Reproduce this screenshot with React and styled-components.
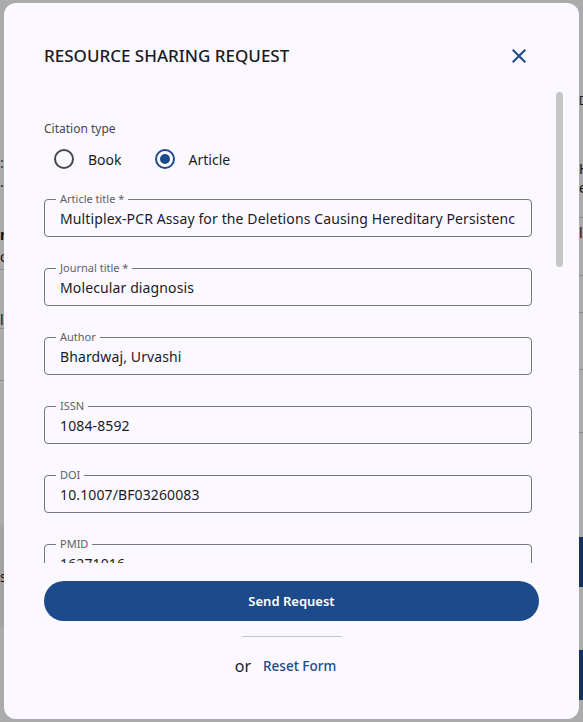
import React, { useState, useRef, useLayoutEffect } from 'react'
import styled, { createGlobalStyle } from 'styled-components'

const fields = [
  { id: 'articleTitle', label: 'Article title *', value: 'Multiplex-PCR Assay for the Deletions Causing Hereditary Persistence of Fetal Hemoglobin' },
  { id: 'journalTitle', label: 'Journal title *', value: 'Molecular diagnosis' },
  { id: 'author', label: 'Author', value: 'Bhardwaj, Urvashi' },
  { id: 'issn', label: 'ISSN', value: '1084-8592' },
  { id: 'doi', label: 'DOI', value: '10.1007/BF03260083' },
  { id: 'pmid', label: 'PMID', value: '16271016' },
  { id: 'volume', label: 'Volume', value: '2' },
  { id: 'issue', label: 'Issue', value: '4' },
  { id: 'pages', label: 'Pages', value: '309-319' },
  { id: 'year', label: 'Publication year', value: '1997' },
  { id: 'publisher', label: 'Publisher', value: '' },
  { id: 'place', label: 'Place of publication', value: '' },
  { id: 'edition', label: 'Edition', value: '' },
  { id: 'chapter', label: 'Chapter', value: '' },
  { id: 'pickup', label: 'Pickup location', value: '' },
  { id: 'neededBy', label: 'Needed by', value: '' },
  { id: 'notes', label: 'Notes', value: '' },
]

// bits of the page that peek out from behind the dialog
const leftRows = [
  { h: 154 },
  { h: 18, text: ':', color: '#1d4a8a' },
  { h: 20, text: '.' },
  { h: 34 },
  { h: 18, text: 'n', bold: true },
  { h: 26, text: 'o', line: true },
  { h: 42 },
  { h: 17, text: 'l', line: true },
  { h: 52, line: true },
  { h: 146 },
  { h: 100, text: 's', band: true },
]

const rightRows = [
  { h: 90 },
  { h: 20, text: '⊡' },
  { h: 50 },
  { h: 18, text: 'H' },
  { h: 20, text: 'e' },
  { h: 20, line: true },
  { h: 58, text: 'l', line: true, top: true },
  { h: 37, line: true },
  { h: 57, line: true },
  { h: 63, line: true },
  { h: 104 },
  { h: 50, blue: true },
  { h: 63 },
  { h: 50, blue: true },
]

const TRACK_MARGIN = 4

function App() {
  const [citation, setCitation] = useState('article')
  const [thumb, setThumb] = useState({ top: TRACK_MARGIN, height: 0 })
  const scrollRef = useRef(null)

  const updateThumb = () => {
    const el = scrollRef.current
    if (!el) return
    const track = el.clientHeight - TRACK_MARGIN * 2
    const height = Math.round(track * el.clientHeight / el.scrollHeight)
    const maxScroll = el.scrollHeight - el.clientHeight
    const top = TRACK_MARGIN + (maxScroll > 0 ? (el.scrollTop / maxScroll) * (track - height) : 0)
    setThumb({ top, height })
  }

  useLayoutEffect(() => {
    updateThumb()
  }, [])

  return (
    <>
      <GlobalStyle />
      <Page>
        <Strip>
          {leftRows.map((r, i) => (
            <StripRow key={i} $h={r.h} $line={r.line} $band={r.band}>
              {r.text && <StripText $color={r.color} $bold={r.bold}>{r.text}</StripText>}
            </StripRow>
          ))}
        </Strip>
        <Strip>
          {rightRows.map((r, i) => (
            <StripRow key={i} $h={r.h} $line={r.line} $blue={r.blue} $top={r.top} $inset>
              {r.text && <StripText>{r.text}</StripText>}
            </StripRow>
          ))}
        </Strip>
      </Page>

      <Overlay>
        <Dialog role="dialog" aria-labelledby="rs-title">
          <Header>
            <Title id="rs-title">RESOURCE SHARING REQUEST</Title>
            <CloseButton aria-label="Close">
              <svg width="24" height="24" viewBox="0 0 24 24" fill="currentColor">
                <path d="M19 6.41 17.59 5 12 10.59 6.41 5 5 6.41 10.59 12 5 17.59 6.41 19 12 13.41 17.59 19 19 17.59 13.41 12z" />
              </svg>
            </CloseButton>
          </Header>

          <BodyWrap>
            <Body ref={scrollRef} onScroll={updateThumb}>
              <GroupLabel>Citation type</GroupLabel>
              <RadioRow>
                <RadioOption>
                  <RadioInput
                    name="citation"
                    checked={citation === 'book'}
                    onChange={() => setCitation('book')}
                  />
                  Book
                </RadioOption>
                <RadioOption>
                  <RadioInput
                    name="citation"
                    checked={citation === 'article'}
                    onChange={() => setCitation('article')}
                  />
                  Article
                </RadioOption>
              </RadioRow>

              <FieldList>
                {fields.map(f => (
                  <Field key={f.id}>
                    <Legend>{f.label}</Legend>
                    <Input id={f.id} name={f.id} defaultValue={f.value} />
                  </Field>
                ))}
              </FieldList>
            </Body>
            {thumb.height > 0 && (
              <Thumb style={{ top: thumb.top, height: thumb.height }} />
            )}
          </BodyWrap>

          <SendButton type="button">Send Request</SendButton>
          <Divider />
          <ResetRow>
            <Or>or</Or>
            <ResetLink type="button">Reset Form</ResetLink>
          </ResetRow>
        </Dialog>
      </Overlay>
    </>
  )
}

export default App

const GlobalStyle = createGlobalStyle`
  * { box-sizing: border-box; }
  html, body { margin: 0; height: 100%; }
  body {
    font-family: "Noto Sans", "DejaVu Sans", sans-serif;
    background: #fff;
    overflow: hidden;
  }
`

const Page = styled.div`
  display: flex;
  justify-content: space-between;
  height: 722px;
  overflow: hidden;
`

const Strip = styled.div`
  width: 12px;
  display: flex;
  flex-direction: column;
`

const StripRow = styled.div`
  flex: none;
  height: ${p => p.$h}px;
  display: flex;
  align-items: ${p => (p.$top ? 'flex-start' : 'center')};
  padding: ${p => (p.$top ? '6px' : '0')} 0 0 ${p => (p.$inset ? '8px' : '0')};
  font-size: 14px;
  line-height: 18px;
  background: ${p => (p.$blue ? '#1d4a8a' : p.$band ? '#f2f2f2' : 'transparent')};
  border-bottom: ${p => (p.$line ? '1px solid #cfcfd4' : '0')};
`

const StripText = styled.span`
  color: ${p => p.$color || '#1b1b1f'};
  font-weight: ${p => (p.$bold ? 700 : 400)};
`

const Overlay = styled.div`
  position: fixed;
  inset: 0;
  background: rgba(0, 0, 0, 0.33);
  display: flex;
  align-items: center;
  justify-content: center;
`

const Dialog = styled.div`
  width: 575px;
  height: 716px;
  background: #fbf9ff;
  border-radius: 12px;
  padding: 41px 40px 43px 40px;
  display: flex;
  flex-direction: column;
`

const Header = styled.div`
  flex: none;
  height: 24px;
  display: flex;
  align-items: center;
  justify-content: space-between;
  padding-right: 8px;
`

const Title = styled.h2`
  margin: 0;
  font-size: 17px;
  line-height: 24px;
  font-weight: 500;
  color: #1b1b1f;
`

const CloseButton = styled.button`
  width: 24px;
  height: 24px;
  padding: 0;
  border: 0;
  background: none;
  color: #1d4a8a;
  display: flex;
  cursor: pointer;
`

const BodyWrap = styled.div`
  flex: 1;
  min-height: 0;
  position: relative;
  display: flex;
  margin: 20px -27px 0 0;
`

const Body = styled.div`
  flex: 1;
  overflow-y: auto;
  padding: 33px 34px 14px 0;
  scrollbar-width: none;

  &::-webkit-scrollbar {
    display: none;
  }
`

const Thumb = styled.div`
  position: absolute;
  right: 3px;
  width: 7px;
  border-radius: 4px;
  background: #c6c6c6;
`

const GroupLabel = styled.div`
  font-size: 12px;
  line-height: 16px;
  color: #44474e;
`

const RadioRow = styled.div`
  display: flex;
  margin-top: 2px;
  height: 40px;
`

const RadioOption = styled.label`
  display: flex;
  align-items: center;
  gap: 4px;
  margin-right: 23px;
  font-size: 14px;
  color: #1b1b1f;
  cursor: pointer;
`

const RadioInput = styled.input.attrs({ type: 'radio' })`
  appearance: none;
  margin: 10px;
  width: 20px;
  height: 20px;
  border: 2px solid #45464f;
  border-radius: 50%;
  display: grid;
  place-content: center;
  cursor: pointer;

  &:checked {
    border-color: #1d4a8a;
  }
  &:checked::before {
    content: "";
    width: 10px;
    height: 10px;
    border-radius: 50%;
    background: #1d4a8a;
  }
`

const FieldList = styled.div`
  display: flex;
  flex-direction: column;
  gap: 25px;
  margin-top: 14px;
`

const Field = styled.fieldset`
  margin: 0;
  min-width: 0;
  padding: 0 15px 5px 11px;
  border: 1px solid #74777f;
  border-radius: 4px;
`

const Legend = styled.legend`
  padding: 0 4px;
  font-size: 11px;
  line-height: 12px;
  color: #5e5f66;
`

const Input = styled.input`
  display: block;
  width: 100%;
  height: 26px;
  padding: 0 0 0 4px;
  border: 0;
  outline: none;
  background: transparent;
  font-family: inherit;
  font-size: 14px;
  letter-spacing: 0.12px;
  color: #1b1b1f;
`

const SendButton = styled.button`
  flex: none;
  margin-top: 18px;
  height: 40px;
  width: 100%;
  border: 0;
  border-radius: 20px;
  background: #1d4a8a;
  color: #fff;
  font-family: inherit;
  font-size: 13px;
  font-weight: 600;
  cursor: pointer;
`

const Divider = styled.div`
  flex: none;
  align-self: center;
  width: 100px;
  height: 1px;
  margin-top: 15px;
  background: #c5c6d0;
`

const ResetRow = styled.div`
  flex: none;
  margin-top: 19px;
  height: 20px;
  display: flex;
  align-items: center;
  justify-content: center;
  gap: 12px;
  padding-right: 12px;
`

const Or = styled.span`
  font-size: 16px;
  color: #1b1b1f;
`

const ResetLink = styled.button`
  padding: 0;
  border: 0;
  background: none;
  font-family: inherit;
  font-size: 13.5px;
  font-weight: 500;
  color: #1d4a8a;
  cursor: pointer;
`
